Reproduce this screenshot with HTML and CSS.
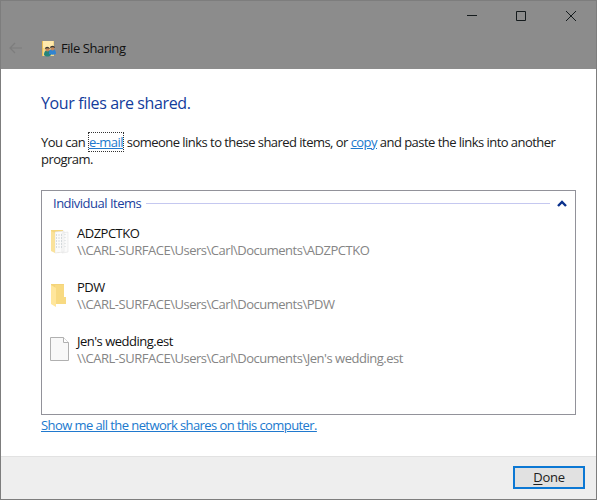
FILE: index.html
```html
<!DOCTYPE html>
<html lang="en">
<head>
<meta charset="utf-8">
<title>File Sharing</title>
<link rel="stylesheet" href="styles.css">
</head>
<body>
<div class="window">
  <header class="titlebar">
    <div class="controls">
      <svg class="control" width="50" height="30" viewBox="0 0 50 30"><path d="M7 14.5h10"/></svg>
      <svg class="control" width="50" height="30" viewBox="0 0 50 30"><path d="M6.500 10.500h9v9h-9z"/></svg>
      <svg class="control" width="31" height="30" viewBox="0 0 31 30"><path d="M6 10l10 10M16 10l-10 10"/></svg>
    </div>
    <div class="caption">
      <svg class="back" width="14" height="12" viewBox="0 0 14 12"><path d="M13 6H1M6 1L1 6l5 5"/></svg>
      <svg class="app-icon" width="14" height="17" viewBox="0 0 14 17">
        <path fill="#f5d98b" d="M0 1h12v15H0z"/><path fill="#ffe9ac" d="M1 1h10v7H1z"/><path fill="#e9bd58" d="M0 1h1v15H0z"/>
        <path fill="#268479" d="M2 15c0-4 2-5 4-5s3 1 3 5c-2 2-5 2-7 0z"/><path fill="#3284d0" d="M7 14c0-4 1-5 4-5 2 0 3 2 3 5-2 1-5 1-7 0z"/>
        <circle cx="5.500" cy="9.500" r="2" fill="#c3875b"/><circle cx="10.500" cy="8.500" r="2" fill="#c3875b"/>
        <path fill="#3a3936" d="M3 9c0-3 4-3 5 0-2-1-3-1-5 0zM8 8c0-3 5-3 5 0-2-1-3-1-5 0z"/>
      </svg>
      <span class="app-name">File Sharing</span>
    </div>
  </header>
  <main class="content">
    <h1>Your files are shared.</h1>
    <p class="intro">You can <a class="focused" href="#">e-mail</a> someone links to these shared items, or <a href="#">copy</a> and paste the links into another<br>program.</p>
    <section class="list">
      <div class="group"><span class="group-name">Individual Items</span><span class="rule"></span>
        <svg class="chevron" width="10" height="7" viewBox="0 0 10 7"><path d="M1 6l4-4 4 4"/></svg></div>
      <div class="item">
        <svg width="24" height="28" viewBox="0 0 24 28">
          <path fill="#f6d77e" d="M1 3h12v21l-5 2-7-3z"/><path fill="#fbfbfb" stroke="#e2e2e2" stroke-width=".6" d="M5 5l9-1v21l-9 1zM12 6l6-1v20l-6 1z"/>
          <path stroke="#b4bfc4" stroke-width="1" stroke-dasharray="1 1.500" d="M6 8h7M6 11h7M6 14h7M6 17h7M6 20h7"/><path stroke="#ccd3d6" stroke-width=".8" stroke-dasharray="1 2" d="M15 7v15"/>
          <path fill="#fae29b" d="M1 4l4 2v20l-4-2z"/>
        </svg>
        <div><div class="name">ADZPCTKO</div><div class="path">\\CARL-SURFACE\Users\Carl\Documents\ADZPCTKO</div></div>
      </div>
      <div class="item">
        <svg width="24" height="28" viewBox="0 0 24 28"><path fill="#f4d47a" d="M1 3h13v16H1z"/><path fill="#f8da82" d="M5 4h9v12h2v7H5z"/><path fill="#ffe69c" d="M1 4l5 3v19l-5-3z"/></svg>
        <div><div class="name">PDW</div><div class="path">\\CARL-SURFACE\Users\Carl\Documents\PDW</div></div>
      </div>
      <div class="item">
        <svg width="24" height="28" viewBox="0 0 24 28"><path fill="#f8f8f8" stroke="#b0b0b0" d="M.500 2.500h13l5 5v18H.5z"/><path fill="#fff" stroke="#b0b0b0" d="M13.500 2.500v5h5"/></svg>
        <div><div class="name">Jen's wedding.est</div><div class="path">\\CARL-SURFACE\Users\Carl\Documents\Jen's wedding.est</div></div>
      </div>
    </section>
    <a class="network" href="#">Show me all the network shares on this computer.</a>
  </main>
  <footer class="footer"><button type="button"><span class="accel">D</span>one</button></footer>
</div>
</body>
</html>
```

FILE: styles.css
```css
* { box-sizing: border-box; }
body { margin: 0; font: 13px/17px "Open Sans", "Noto Sans", sans-serif; color: #202020; }
.window { width: 597px; height: 500px; display: flex; flex-direction: column; border: 1px solid #7d7d7d; background: #fff; overflow: hidden; }
.titlebar { height: 68px; background: #8c8c8c; }
.controls { height: 30px; display: flex; justify-content: flex-end; padding-right: 5px; }
.control { flex: none; fill: none; stroke: #151b1d; stroke-width: 1; }
.caption { display: flex; align-items: center; height: 34px; padding-left: 8px; }
.back { fill: none; stroke: #7d7d7d; stroke-width: 1.2; }
.app-icon { margin-left: 19px; }
.app-name { margin-left: 5px; letter-spacing: -.45px; color: #111; }
.content { height: 387px; padding: 22px 20px 0 40px; }
h1 { margin: 0; font-size: 16px; line-height: 24px; font-weight: 400; color: #123c9c; letter-spacing: -.37px; }
.intro { margin: 19px 0 0; white-space: nowrap; letter-spacing: -.54px; }
a { color: #2079ce; text-decoration: underline; text-underline-offset: 1px; }
.focused { outline: 1px dotted #333; margin: 0 1px; }
.list { margin-top: 22px; width: 535px; height: 225px; border: 1px solid #92929a; padding: 4px 8px 0; }
.group { display: flex; align-items: center; height: 17px; padding-left: 3px; color: #1a3f9e; letter-spacing: -.5px; }
.group-name { flex: none; width: 88px; white-space: nowrap; }
.rule { flex: none; height: 1px; background: #c5c8f0; width: 404px; margin-left: 5px; }
.chevron { flex: none; margin-left: 7px; fill: none; stroke: #09308c; stroke-width: 2.4; }
.item { display: flex; height: 54px; gap: 3px; white-space: nowrap; }
.group + .item { margin-top: 13px; }
.item svg { flex: none; margin-top: 2px; }
.name { letter-spacing: -.5px; color: #111; }
.path { letter-spacing: -.48px; color: #858585; }
.network { display: inline-block; margin-top: 2px; white-space: nowrap; letter-spacing: -.58px; }
.footer { flex: 1; display: flex; justify-content: flex-end; padding: 9px 11px 0 0; background: #eee; border-top: 1px solid #e2e2e2; }
button { width: 72px; height: 23px; padding: 0; border: 2px solid #0c78d4; background: #e1e1e1; font: inherit; color: #202020; letter-spacing: -.3px; }
.accel { text-decoration: underline; text-underline-offset: 2px; }
```
